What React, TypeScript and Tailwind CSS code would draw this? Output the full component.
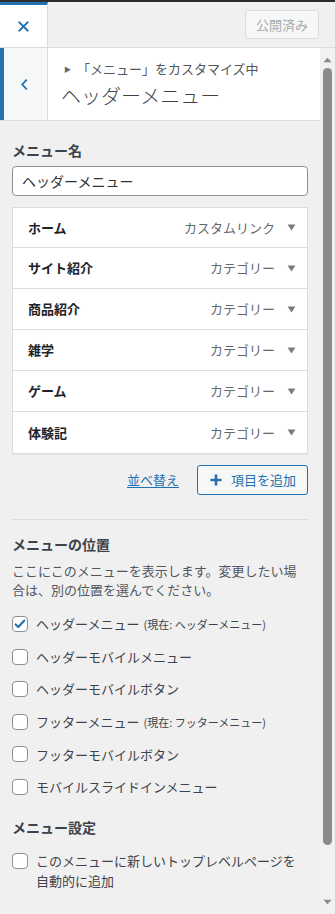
import React from 'react';

const items = [
  { title: 'ホーム', type: 'カスタムリンク' },
  { title: 'サイト紹介', type: 'カテゴリー' },
  { title: '商品紹介', type: 'カテゴリー' },
  { title: '雑学', type: 'カテゴリー' },
  { title: 'ゲーム', type: 'カテゴリー' },
  { title: '体験記', type: 'カテゴリー' },
];

const locations = [
  { label: 'ヘッダーメニュー', note: '(現在: ヘッダーメニュー)', checked: true },
  { label: 'ヘッダーモバイルメニュー' },
  { label: 'ヘッダーモバイルボタン' },
  { label: 'フッターメニュー', note: '(現在: フッターメニュー)' },
  { label: 'フッターモバイルボタン' },
  { label: 'モバイルスライドインメニュー' },
];

const Checkbox: React.FC<{ checked?: boolean }> = ({ checked }) => (
  <span className="w-4 h-4 shrink-0 rounded-[4px] border border-[#8c8f94] bg-white flex items-center justify-center">
    {checked && (
      <svg viewBox="0 0 16 16" className="w-[14px] h-[14px]">
        <path d="M3 8.5l3 3 7-7.5" fill="none" stroke="#2271b1" strokeWidth="2.4" strokeLinecap="round" strokeLinejoin="round" />
      </svg>
    )}
  </span>
);

export default function App() {
  return (
    <div className="w-[335px] h-[914px] bg-[#f0f0f1] flex flex-col overflow-hidden font-['Noto_Sans_CJK_JP','Noto_Sans',sans-serif] text-[#2c3338]">
      <div className="h-[2px] bg-[#2c2c2c] shrink-0" />
      {/* header */}
      <div className="h-[46px] shrink-0 flex border-b border-[#dcdcde] bg-[#f0f0f1]">
        <div className="w-[48px] bg-white border-t-[3px] border-[#2271b1] border-r border-r-[#dcdcde] flex items-center justify-center">
          <svg viewBox="0 0 12 12" className="w-[11px] h-[11px]">
            <path d="M1.5 1.5l9 9M10.5 1.5l-9 9" stroke="#2271b1" strokeWidth="2.3" strokeLinecap="round" />
          </svg>
        </div>
        <div className="flex-1 flex items-center justify-end pr-[16px]">
          <div className="h-[29px] px-[10px] flex items-center rounded-[3px] border border-[#dcdcde] bg-[#f6f7f7] text-[13px] text-[#a7aaad]">
            公開済み
          </div>
        </div>
      </div>

      <div className="flex flex-1 min-h-0">
        <div className="w-[320px] flex flex-col">
          {/* section title */}
          <div className="h-[73px] shrink-0 flex border-b border-[#dcdcde] bg-white">
            <div className="w-[48px] bg-[#f6f7f7] border-l-4 border-[#2271b1] border-r border-r-[#dcdcde] flex items-center justify-center">
              <svg viewBox="0 0 10 14" className="w-[9px] h-[13px] -ml-[2px]">
                <path d="M7.5 1.5L2.5 7l5 5.5" fill="none" stroke="#2271b1" strokeWidth="2" />
              </svg>
            </div>
            <div className="flex-1 pl-[14px] pt-[11px]">
              <div className="flex items-center text-[13px] leading-[20px] text-[#50575e]">
                <span className="text-[7px] mr-[6px] ml-[2px] text-[#646970]">▶</span>
                「メニュー」をカスタマイズ中
              </div>
              <div className="mt-[2px] text-[20px] leading-[30px] text-[#3c434a] font-light -ml-[1px]">ヘッダーメニュー</div>
            </div>
          </div>

          {/* panel */}
          <div className="px-3 pt-[19px]">
            <div className="text-[14px] leading-[20px] font-bold text-[#3c434a]">メニュー名</div>
            <div className="mt-[6px] h-[30px] rounded-[4px] border border-[#8c8f94] bg-white px-[9px] flex items-center text-[14px] text-[#2c3338]">
              ヘッダーメニュー
            </div>

            <div className="mt-[11px] border border-[#dcdcde] bg-white divide-y divide-[#dcdcde] shadow-[0_1px_1px_rgba(0,0,0,0.04)]">
              {items.map((it, i) => (
                <div key={it.title} className={`${i === 0 ? 'h-[40px]' : 'h-[41px]'} flex items-center pl-[15px] pr-[11px]`}>
                  <span className="text-[13px] font-bold text-[#1d2327] flex-1">{it.title}</span>
                  <span className="text-[13px] text-[#646970]">{it.type}</span>
                  <svg viewBox="0 0 10 8" className="w-[9px] h-[7px] ml-[12px]">
                    <path d="M0.5 0.5h9L5 7.5z" fill="#787c82" />
                  </svg>
                </div>
              ))}
            </div>

            <div className="mt-[11px] flex items-center justify-end gap-[18px]">
              <span className="text-[13px] text-[#2271b1] underline underline-offset-2">並べ替え</span>
              <div className="h-[30px] w-[111px] rounded-[3px] border border-[#2271b1] bg-[#f6f7f7] flex items-center pl-[12px] text-[13px] text-[#2271b1]">
                <svg viewBox="0 0 12 12" className="w-[12px] h-[12px] mr-[9px]">
                  <path d="M6 0.5v11M0.5 6h11" stroke="#2271b1" strokeWidth="2.6" />
                </svg>
                項目を追加
              </div>
            </div>

            <div className="mt-[24px] border-t border-[#dcdcde]" />

            <div className="mt-[14px] text-[14px] leading-[20px] font-bold text-[#3c434a]">メニューの位置</div>
            <p className="mt-[7px] text-[13px] leading-[19px] text-[#50575e]">
              ここにこのメニューを表示します。変更したい場合は、別の位置を選んでください。
            </p>

            <div className="mt-[17px] flex flex-col gap-[16.6px]">
              {locations.map((l) => (
                <div key={l.label} className="flex items-center gap-[8px] h-[16px] text-[13px] text-[#3c434a]">
                  <Checkbox checked={l.checked} />
                  <span>
                    {l.label}
                    {l.note && <span className="text-[11px] ml-[4px]">{l.note}</span>}
                  </span>
                </div>
              ))}
            </div>

            <div className="mt-[22px] text-[14px] leading-[20px] font-bold text-[#3c434a]">メニュー設定</div>
            <div className="mt-[14px] flex items-start gap-[8px] text-[13px] leading-[20px] text-[#3c434a]">
              <span className="mt-[2px]"><Checkbox /></span>
              <span>このメニューに新しいトップレベルページを<br />自動的に追加</span>
            </div>
          </div>
        </div>

        {/* scrollbar */}
        <div className="w-[15px] bg-[#f1f1f1] flex flex-col items-center">
          <svg viewBox="0 0 10 6" className="w-[9px] h-[6px] mt-[9px]">
            <path d="M5 0.5L9.5 5.5h-9z" fill="#8a8a8a" />
          </svg>
          <div className="mt-[5px] w-[9px] h-[777px] rounded-full bg-[#8a8a8a]" />
          <div className="flex-1" />
          <svg viewBox="0 0 10 6" className="w-[9px] h-[6px] mb-[9px]">
            <path d="M0.5 0.5h9L5 5.5z" fill="#8a8a8a" />
          </svg>
        </div>
      </div>
    </div>
  );
}
